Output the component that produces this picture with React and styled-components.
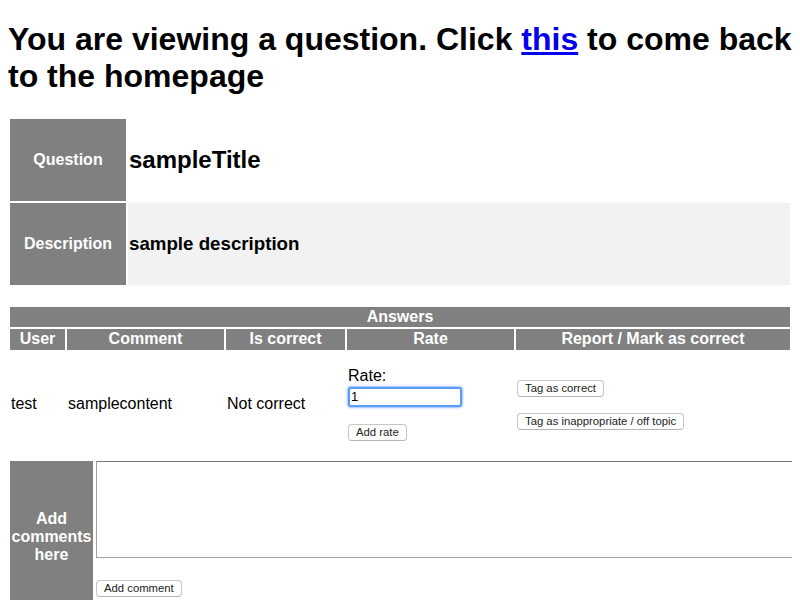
import React from 'react'
import styled, { createGlobalStyle } from 'styled-components'

const GlobalStyle = createGlobalStyle`
    html {
        overflow: hidden;
    }
    body {
        margin: 8px;
        background: #fff;
        color: #000;
        font-family: "Liberation Sans", Arial, Helvetica, sans-serif;
    }
`

const Heading = styled.h1`
    font-size: 32px;
    font-weight: bold;
    margin: 13.44px 0 21.44px;
`
const HomeLink = styled.a`
    color: #0000ee;
    text-decoration: underline;
`

// 질문 정보 테이블
const InfoTable = styled.table`
    width: 100%;
    border-spacing: 2px;
`
const InfoLabel = styled.th`
    box-sizing: border-box;
    width: 116px;
    height: 82px;
    padding: 0;
    background: #808080;
    color: #fff;
    font-size: 16px;
    font-weight: bold;
    text-align: center;
`
const InfoValue = styled.td`
    padding: 1px;
    background: ${props => (props.$shaded ? '#f2f2f2' : 'transparent')};
    vertical-align: middle;
`
const Title = styled.h2`
    margin: 0;
    font-size: 24px;
`
const Description = styled.h3`
    margin: 0;
    font-size: 18.72px;
`

// 답변 테이블
const AnswerTable = styled.table`
    width: 100%;
    table-layout: fixed;
    border-spacing: 2px;
    margin-top: 18px;
`
const HeadCell = styled.th`
    padding: 1px;
    background: #808080;
    color: #fff;
    font-size: 16px;
    font-weight: bold;
    line-height: 18.4px;
    text-align: center;
`
const AnswerRow = styled.tr`
    height: 104px;
`
const DataCell = styled.td`
    padding: 1px;
    padding-top: ${props => props.$shift || 1}px;
    font-size: 16px;
    vertical-align: middle;
`
const Stack = styled.div`
    display: flex;
    flex-direction: column;
    align-items: flex-start;
`
const RateLabel = styled.span`
    line-height: 18px;
`
const RateInput = styled.input`
    box-sizing: border-box;
    width: 114px;
    height: 20px;
    margin: 2px 0 0;
    padding: 0 1px;
    border: 2px solid #5a9cf8;
    border-radius: 3px;
    box-shadow: 0 0 2px 1px #9cc3fb;
    font-family: "Liberation Sans", Arial, sans-serif;
    font-size: 13px;
    outline: none;
`
const Button = styled.button`
    box-sizing: border-box;
    margin: ${props => props.$gap || 0}px 0 0;
    padding: 1px 7px;
    border: 1px solid #c6c6c6;
    border-bottom-color: #b4b4b4;
    border-radius: 4px;
    background: #fff;
    color: #222;
    font-family: "Liberation Sans", Arial, sans-serif;
    font-size: 11.3px;
    line-height: 13px;
`

// 댓글 입력 테이블
const CommentTable = styled.table`
    width: 100%;
    table-layout: fixed;
    border-spacing: 2px;
    margin-top: 1px;
`
const CommentLabel = styled.th`
    box-sizing: border-box;
    width: 83px;
    padding: 0;
    background: #808080;
    color: #fff;
    font-size: 16px;
    font-weight: bold;
    line-height: 18px;
    text-align: center;
`
const CommentCell = styled.td`
    padding: 0 1px 16px;
    vertical-align: top;
`
const CommentBox = styled.textarea`
    display: block;
    box-sizing: border-box;
    width: 760px;
    height: 97px;
    margin: 0;
    border: 1px solid #a0a0a0;
    border-top-color: #767676;
    resize: none;
`

const answers = [
    { id: 1, user: 'test', content: 'samplecontent', correct: false, rate: '1' }
]

const App = () => {
    return (
        <>
            <GlobalStyle />
            <Heading>
                You are viewing a question. Click <HomeLink href="#">this</HomeLink> to come back to the homepage
            </Heading>
            <InfoTable>
                <tbody>
                    <tr>
                        <InfoLabel>Question</InfoLabel>
                        <InfoValue>
                            <Title>sampleTitle</Title>
                        </InfoValue>
                    </tr>
                    <tr>
                        <InfoLabel>Description</InfoLabel>
                        <InfoValue $shaded>
                            <Description>sample description</Description>
                        </InfoValue>
                    </tr>
                </tbody>
            </InfoTable>
            <AnswerTable>
                <colgroup>
                    <col style={{ width: 55 }} />
                    <col style={{ width: 157 }} />
                    <col style={{ width: 119 }} />
                    <col style={{ width: 167 }} />
                    <col />
                </colgroup>
                <thead>
                    <tr>
                        <HeadCell colSpan={5}>Answers</HeadCell>
                    </tr>
                    <tr>
                        <HeadCell>User</HeadCell>
                        <HeadCell>Comment</HeadCell>
                        <HeadCell>Is correct</HeadCell>
                        <HeadCell>Rate</HeadCell>
                        <HeadCell>Report / Mark as correct</HeadCell>
                    </tr>
                </thead>
                <tbody>
                    {answers.map(answer =>
                        <AnswerRow key={answer.id}>
                            <DataCell>{answer.user}</DataCell>
                            <DataCell>{answer.content}</DataCell>
                            <DataCell>{answer.correct ? 'Correct' : 'Not correct'}</DataCell>
                            <DataCell>
                                <Stack>
                                    <RateLabel>Rate:</RateLabel>
                                    <RateInput type="text" defaultValue={answer.rate} />
                                    <Button $gap={17}>Add rate</Button>
                                </Stack>
                            </DataCell>
                            <DataCell $shift={3}>
                                <Stack>
                                    <Button>Tag as correct</Button>
                                    <Button $gap={16}>Tag as inappropriate / off topic</Button>
                                </Stack>
                            </DataCell>
                        </AnswerRow>
                    )}
                </tbody>
            </AnswerTable>
            <CommentTable>
                <tbody>
                    <tr>
                        <CommentLabel>Add comments here</CommentLabel>
                        <CommentCell>
                            <CommentBox />
                            <Button $gap={22}>Add comment</Button>
                        </CommentCell>
                    </tr>
                </tbody>
            </CommentTable>
        </>
    )
}

export default App
